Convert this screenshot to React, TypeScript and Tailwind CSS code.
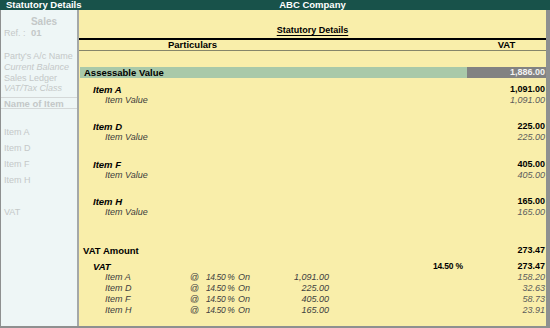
import React from "react";

const items = [
  { name: "Item A", value: "1,091.00", tax: "158.20", h: "h-[37px]" },
  { name: "Item D", value: "225.00", tax: "32.63", h: "h-[38px]" },
  { name: "Item F", value: "405.00", tax: "58.73", h: "h-[37px]" },
  { name: "Item H", value: "165.00", tax: "23.91", h: "h-[22px]" },
];

const LeftPanel = () => (
  <div className="w-[78px] shrink-0 bg-[#eef6f6] text-[#c4c8c8] text-[9px] leading-[11px] border-r-2 border-[#a4a8a8]">
    <div className="pt-[6px] h-[17px] text-center pl-[10px] font-bold text-[10px]">Sales</div>
    <div className="h-[11px] pl-[3px] whitespace-nowrap">
      Ref. : <span className="ml-[3px] font-bold text-[9.5px]">01</span>
    </div>
    <div className="mt-[13px] h-[11px] pl-[3px] whitespace-nowrap">Party's A/c Name</div>
    <div className="h-[11px] pl-[3px] italic whitespace-nowrap">Current Balance</div>
    <div className="h-[10px] leading-[10px] pl-[3px] whitespace-nowrap">Sales Ledger</div>
    <div className="h-[11px] pl-[3px] italic whitespace-nowrap">VAT/Tax Class</div>
    <div className="mt-[3px] border-t border-b border-[#d4d8d8] h-[12px] pl-[3px] font-bold text-[9.5px] whitespace-nowrap">
      Name of Item
    </div>
    <div className="mt-[15px]">
      {items.map((it) => (
        <div key={it.name} className="h-[16px] leading-[16px] pl-[3px]">
          {it.name}
        </div>
      ))}
      <div className="h-[16px]" />
      <div className="h-[16px] leading-[16px] pl-[3px]">VAT</div>
    </div>
  </div>
);

const MainPanel = () => (
  <div className="flex-1 bg-[#f9eeaa] text-black">
    <div className="pt-[6px] h-[17px] text-center">
      <span className="font-bold text-[9px] leading-[11px] underline underline-offset-2">Statutory Details</span>
    </div>
    <div className="mt-[11px] border-t-2 border-black" />
    <div className="flex h-[11px] leading-[10px] font-bold text-[9.5px] border-b border-[#86866a]">
      <div className="w-[227px] text-center">Particulars</div>
      <div className="flex-1" />
      <div className="w-[79px] text-center">VAT</div>
    </div>

    <div className="mt-[16px] flex h-[11px] leading-[11px] text-[9.5px] font-bold">
      <div className="flex-1 bg-[#a9c9a9] pl-[4px] ml-[1px]">Assessable Value</div>
      <div className="w-[79px] bg-[#828282] text-right pr-[1px] text-[#f2f2f2] text-[9px]">1,886.00</div>
    </div>

    <div className="mt-[6px]">
      {items.map((it) => (
        <div key={it.name} className={it.h}>
          <div className="flex h-[11px] leading-[11px]">
            <div className="flex-1 pl-[14px] font-bold italic text-[9.5px]">{it.name}</div>
            <div className="pr-[1px] font-bold text-[9px]">{it.value}</div>
          </div>
          <div className="flex h-[11px] leading-[11px] text-[9px] italic">
            <div className="flex-1 pl-[26px] text-[#3c3c3c]">Item Value</div>
            <div className="pr-[1px] text-[#5c5c5c]">{it.value}</div>
          </div>
        </div>
      ))}
    </div>

    <div className="mt-[27px] flex h-[11px] leading-[11px] font-bold text-[9.5px]">
      <div className="flex-1 pl-[4px]">VAT Amount</div>
      <div className="pr-[1px] text-[9px]">273.47</div>
    </div>
    <div className="mt-[5px] flex h-[11px] leading-[11px] font-bold">
      <div className="flex-1 pl-[14px] italic text-[9.5px]">VAT</div>
      <div className="w-[32px] text-[8.5px] whitespace-nowrap tracking-[-0.2px]">14.50 %</div>
      <div className="w-[81px] pr-[1px] text-right text-[9px]">273.47</div>
    </div>
    {items.map((it) => (
      <div key={it.name} className="flex h-[11px] leading-[11px] text-[9px] text-[#404040]">
        <div className="w-[111px] pl-[26px] italic">{it.name}</div>
        <div className="w-[16px]">@</div>
        <div className="w-[32px] italic whitespace-nowrap text-[8.5px] tracking-[-0.4px]">14.50 %</div>
        <div className="w-[20px] italic">On</div>
        <div className="w-[71px] text-right italic">{it.value}</div>
        <div className="flex-1 pr-[1px] text-right italic text-[#5c5c5c]">{it.tax}</div>
      </div>
    ))}
  </div>
);

export default function App() {
  return (
    <div className="w-[550px] h-[328px] overflow-hidden flex flex-col font-['Liberation_Sans',Arial,sans-serif] bg-[#8c8c8c]">
      <div className="h-[10px] flex items-center bg-[#18524a] text-white font-bold text-[9.5px] leading-[10px]">
        <div className="w-[79px] pl-[6px] whitespace-nowrap">Statutory Details</div>
        <div className="flex-1 text-center pr-[4px]">ABC Company</div>
      </div>
      <div className="flex h-[318px] border-l border-r-[4px] border-b-2 border-[#8e9090]">
        <LeftPanel />
        <MainPanel />
      </div>
    </div>
  );
}
